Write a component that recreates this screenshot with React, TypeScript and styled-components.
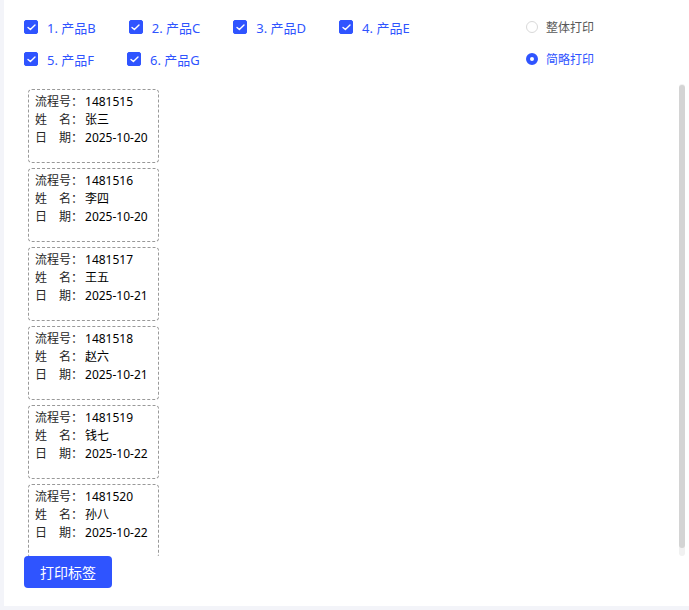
import React, { useState } from 'react';
import styled, { createGlobalStyle } from 'styled-components';

const GlobalStyle = createGlobalStyle`
  html, body {
    margin: 0;
    padding: 0;
    background: #f3f4f9;
  }
  body {
    font-family: "Noto Sans", "Noto Sans CJK SC", sans-serif;
  }
`;

const BLUE = '#2f54ff';

const Panel = styled.div`
  margin-left: 4px;
  height: 606px;
  background: #fff;
  box-sizing: border-box;
  padding: 11px 4px 0 20px;
  display: flex;
  flex-direction: column;
`;

const TopBar = styled.div`
  display: flex;
  align-items: flex-start;
`;

const CheckGroup = styled.div`
  flex: 1;
  display: flex;
  flex-wrap: wrap;
`;

const CheckItem = styled.label`
  display: flex;
  align-items: center;
  height: 32px;
  margin-right: 33px;
  cursor: pointer;
  font-size: 13px;
  color: ${BLUE};
`;

const Box = styled.span<{ $checked: boolean }>`
  width: 14px;
  height: 14px;
  border-radius: 2px;
  box-sizing: border-box;
  margin-right: 9px;
  display: flex;
  align-items: center;
  justify-content: center;
  background: ${(p) => (p.$checked ? BLUE : '#fff')};
  border: 1px solid ${(p) => (p.$checked ? BLUE : '#d9d9d9')};
`;

const RadioGroup = styled.div`
  width: 159px;
  display: flex;
  flex-direction: column;
`;

const RadioItem = styled.label<{ $active: boolean }>`
  display: flex;
  align-items: center;
  height: 32px;
  font-size: 12px;
  cursor: pointer;
  color: ${(p) => (p.$active ? BLUE : '#595959')};
`;

const Dot = styled.span<{ $active: boolean }>`
  width: 12px;
  height: 12px;
  border-radius: 50%;
  box-sizing: border-box;
  margin-right: 8px;
  background: #fff;
  border: ${(p) => (p.$active ? `4px solid ${BLUE}` : '1px solid #d9d9d9')};
`;

const ListRow = styled.div`
  margin-top: 9px;
  height: 472px;
  display: flex;
`;

const List = styled.div`
  flex: 1;
  overflow: hidden;
  box-sizing: border-box;
  padding: 5px 0 0 4px;
`;

const ScrollTrack = styled.div`
  width: 6px;
  background: #f1f1f1;
  border-radius: 3px;
  padding-top: 1px;
`;

const ScrollThumb = styled.div`
  height: 463px;
  background: #d4d4d4;
  border-radius: 3px;
`;

const Label = styled.div`
  width: 131px;
  height: 74px;
  box-sizing: border-box;
  border: 1px dashed #999;
  border-radius: 4px;
  padding: 3px 6px;
  margin-bottom: 5px;
  font-size: 12px;
  line-height: 18px;
`;

const Line = styled.div`
  display: flex;
  white-space: nowrap;
`;

const Key = styled.span`
  color: #262626;
  margin-right: 2px;
`;

const Value = styled.span`
  color: #000;
`;

const PrintButton = styled.button`
  align-self: flex-start;
  width: 88px;
  height: 32px;
  border: none;
  border-radius: 4px;
  background: ${BLUE};
  color: #fff;
  font-family: inherit;
  font-size: 14px;
  cursor: pointer;
`;

const products = ['1. 产品B', '2. 产品C', '3. 产品D', '4. 产品E', '5. 产品F', '6. 产品G'];

const records = [
  { no: '1481515', name: '张三', date: '2025-10-20' },
  { no: '1481516', name: '李四', date: '2025-10-20' },
  { no: '1481517', name: '王五', date: '2025-10-21' },
  { no: '1481518', name: '赵六', date: '2025-10-21' },
  { no: '1481519', name: '钱七', date: '2025-10-22' },
  { no: '1481520', name: '孙八', date: '2025-10-22' },
];

const Check = () => (
  <svg width="9" height="7" viewBox="0 0 9 7" fill="none">
    <path d="M1 3.4 L3.4 5.6 L8 1" stroke="#fff" strokeWidth="1.4" strokeLinecap="round" strokeLinejoin="round" />
  </svg>
);

export default function App() {
  const [checked, setChecked] = useState<boolean[]>(products.map(() => true));
  const [mode, setMode] = useState<'full' | 'brief'>('brief');

  const toggle = (i: number) =>
    setChecked((prev) => prev.map((v, j) => (j === i ? !v : v)));

  return (
    <>
      <GlobalStyle />
      <Panel>
        <TopBar>
          <CheckGroup>
            {products.map((p, i) => (
              <CheckItem key={p} onClick={() => toggle(i)}>
                <Box $checked={checked[i]}>{checked[i] && <Check />}</Box>
                {p}
              </CheckItem>
            ))}
          </CheckGroup>
          <RadioGroup>
            <RadioItem $active={mode === 'full'} onClick={() => setMode('full')}>
              <Dot $active={mode === 'full'} />
              整体打印
            </RadioItem>
            <RadioItem $active={mode === 'brief'} onClick={() => setMode('brief')}>
              <Dot $active={mode === 'brief'} />
              简略打印
            </RadioItem>
          </RadioGroup>
        </TopBar>

        <ListRow>
          <List>
            {records.map((r) => (
              <Label key={r.no}>
                <Line>
                  <Key>流程号：</Key>
                  <Value>{r.no}</Value>
                </Line>
                <Line>
                  <Key>姓　名：</Key>
                  <Value>{r.name}</Value>
                </Line>
                <Line>
                  <Key>日　期：</Key>
                  <Value>{r.date}</Value>
                </Line>
              </Label>
            ))}
          </List>
          <ScrollTrack>
            <ScrollThumb />
          </ScrollTrack>
        </ListRow>

        <PrintButton>打印标签</PrintButton>
      </Panel>
    </>
  );
}
